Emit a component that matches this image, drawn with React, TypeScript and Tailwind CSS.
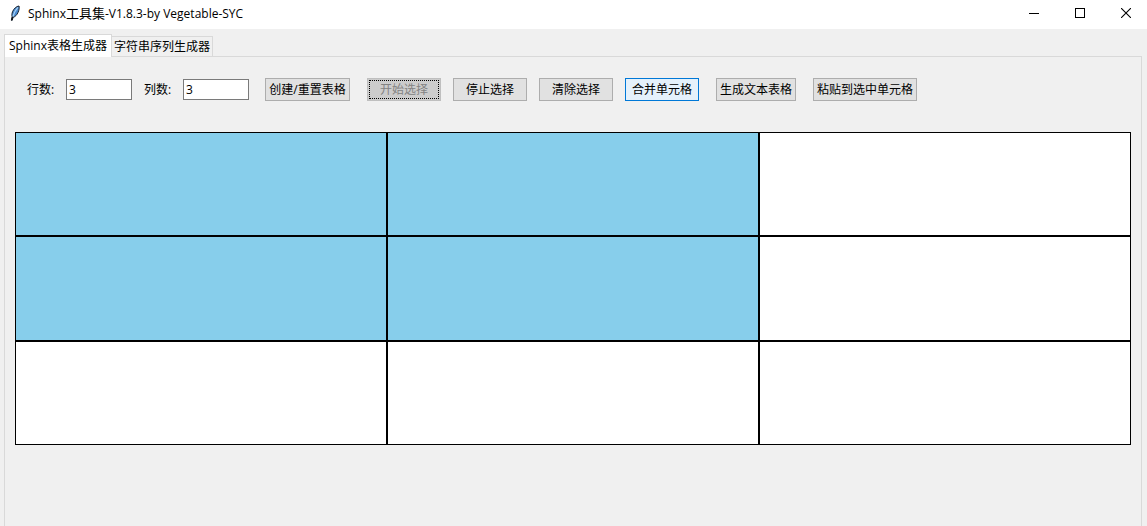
import { useState } from "react";
import type { ButtonHTMLAttributes } from "react";

function FeatherIcon() {
  return (
    <svg viewBox="0 0 16 16" className="size-4 shrink-0" aria-hidden="true">
      <path d="M11 1C8.500 1.200 5.600 3.800 4.500 6.800c-.7 2-.8 3.700-.4 4.900L3.300 15.200l.9.1.9-3c2-.4 3.900-2.500 4.900-4.800C11.100 5.100 11.500 2.400 11 1Z" fill="#4b8bd0" stroke="#17202c" strokeWidth="1" />
      <path d="M9.800 2.400C7.500 5 5.800 8.300 4.800 11.800" fill="none" stroke="#a9d2f5" strokeWidth="1.200" />
      <path d="M4.900 11.600 3.600 15.400" fill="none" stroke="#111" strokeWidth="1.200" />
    </svg>
  );
}

function TitleBar() {
  const control = "flex h-full w-[46px] items-center justify-center hover:bg-[#e5e5e5]";
  return (
    <header className="flex h-[29px] items-center overflow-hidden bg-white">
      <div className="flex grow items-center gap-1 pl-2 pb-[3px]">
        <FeatherIcon />
        <h1 className="whitespace-nowrap leading-4">
          Sphinx<span className="text-[13px]">工具集</span>-V1.8.3-by Vegetable-SYC
        </h1>
      </div>
      <div className="-mr-0.5 flex h-full pb-[3px]">
        <button type="button" aria-label="最小化" className={control}>
          <svg className="size-[10px]" viewBox="0 0 10 10" shapeRendering="crispEdges"><path d="M0 5.500h10" stroke="#000" /></svg>
        </button>
        <button type="button" aria-label="最大化" className={control}>
          <svg className="size-[10px]" viewBox="0 0 10 10" shapeRendering="crispEdges"><path d="M.5.5h9v9h-9z" fill="none" stroke="#000" /></svg>
        </button>
        <button type="button" aria-label="关闭" className={control}>
          <svg className="size-[10px]" viewBox="0 0 10 10"><path d="m0 0 10 10M10 0 0 10" stroke="#000" strokeWidth="1.100" /></svg>
        </button>
      </div>
    </header>
  );
}

function ToolButton({ className, ...props }: ButtonHTMLAttributes<HTMLButtonElement>) {
  return (
    <button
      type="button"
      {...props}
      className={`h-[23px] whitespace-nowrap border text-center leading-4 ${className ?? ""}`}
    />
  );
}

const plain = "border-[#adadad] bg-[#e1e1e1] hover:border-[#0078d7] hover:bg-[#e5f1fb]";

function NumberField({ id, label }: { id: string; label: string }) {
  const [value, setValue] = useState("3");
  return (
    <div className="flex items-center gap-3">
      <label htmlFor={id} className="w-[27px] whitespace-nowrap leading-4">{label}</label>
      <input
        id={id}
        type="text"
        value={value}
        onChange={(e) => setValue(e.target.value)}
        className="h-[21px] w-[66px] border border-[#7a7a7a] bg-white px-0.5 leading-4 outline-none"
      />
    </div>
  );
}

const grid = [
  [true, true, false],
  [true, true, false],
  [false, false, false],
];

export default function App() {
  return (
    <div className="flex min-h-screen flex-col bg-[#f0f0f0] font-['Open_Sans','Noto_Sans_CJK_SC',sans-serif] text-[12px] text-black">
      <TitleBar />
      <main className="flex grow flex-col px-1 pt-[5px] pr-[5px]">
        <div role="tablist" className="relative z-10 -mb-px flex items-end">
          <button type="button" role="tab" aria-selected="true" className="h-[23px] border border-b-0 border-[#d9d9d9] bg-white px-1 leading-4 whitespace-nowrap">
            Sphinx表格生成器
          </button>
          <button type="button" role="tab" aria-selected="false" className="-ml-px h-[21px] border border-[#d9d9d9] px-0.5 pt-px leading-4 whitespace-nowrap">
            字符串序列生成器
          </button>
        </div>
        <section role="tabpanel" className="grow border border-b-0 border-[#d9d9d9] px-[10px] pt-[21px]">
          <div className="flex items-center gap-3 pl-3">
            <NumberField id="rows" label="行数:" />
            <NumberField id="columns" label="列数:" />
            <ToolButton className={`ml-1 mr-[5px] w-[85px] ${plain}`}>创建/重置表格</ToolButton>
            <ToolButton disabled className="w-[74px] border-[#bfbfbf] bg-[#cccccc] p-px text-[#838383]">
              <span className="flex h-full items-center justify-center border border-dotted border-black">开始选择</span>
            </ToolButton>
            <ToolButton className={`w-[74px] ${plain}`}>停止选择</ToolButton>
            <ToolButton className={`w-[74px] ${plain}`}>清除选择</ToolButton>
            <ToolButton className="w-[74px] border-[#0078d7] bg-[#e5f1fb]">合并单元格</ToolButton>
            <ToolButton className={`mx-[5px] w-[80px] ${plain}`}>生成文本表格</ToolButton>
            <ToolButton className={`w-[104px] ${plain}`}>粘贴到选中单元格</ToolButton>
          </div>
          <table aria-label="表格" className="mt-[31px] w-full table-fixed border-separate border-spacing-0">
            <tbody>
              {grid.map((row, r) => (
                <tr key={r}>
                  {row.map((selected, c) => (
                    <td
                      key={c}
                      className={`border border-black ${r === 1 ? "h-[105px]" : "h-[104px]"} ${selected ? "bg-[#87ceeb]" : "bg-white"}`}
                    />
                  ))}
                </tr>
              ))}
            </tbody>
          </table>
        </section>
      </main>
    </div>
  );
}
